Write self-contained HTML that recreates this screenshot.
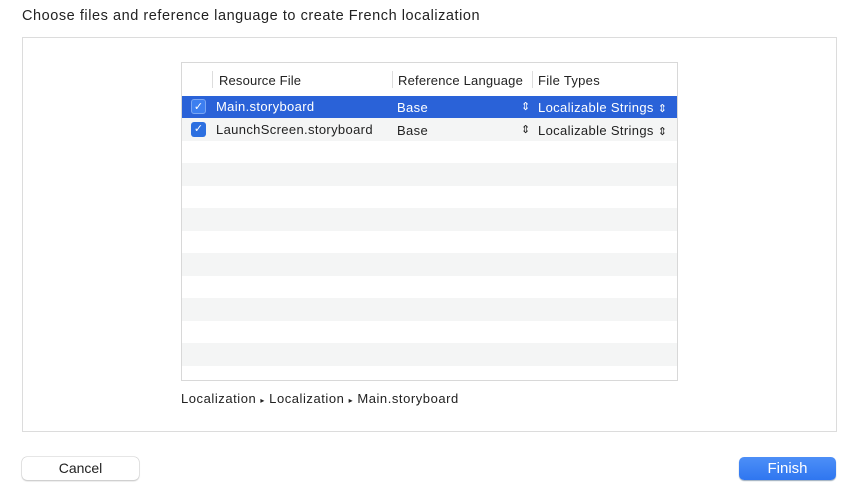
<!DOCTYPE html>
<html><head><style>
*{margin:0;padding:0;box-sizing:border-box}
body{width:850px;height:491px;background:#fff;font-family:"Liberation Sans",sans-serif;color:#222;position:relative;overflow:hidden;font-size:13px;letter-spacing:0.35px}
.a{position:absolute;white-space:nowrap}
.box{position:absolute;left:22px;top:37px;width:815px;height:395px;border:1px solid #dcdcdc;background:#fff}
.tbl{position:absolute;left:181px;top:62px;width:497px;height:319px;border:1px solid #d8d8d8;background:#fff;overflow:hidden}
.stripe{position:absolute;left:0;width:100%;height:22.5px;background:#f4f5f5}
.sep{position:absolute;top:8px;width:1px;height:17px;background:#ddd}
.cb{position:absolute;width:15px;height:15px;border-radius:3px;background:#2c6fe0;color:#fff;font-size:11px;line-height:15px;text-align:center;letter-spacing:0}
.btn{position:absolute;top:457px;height:23px;border-radius:5px;font-size:14px;text-align:center;line-height:23px;letter-spacing:0}
.ud{font-size:11px;letter-spacing:0}
</style></head><body>
<div class="a" style="left:22px;top:8px;font-size:14.5px;letter-spacing:0.55px">Choose files and reference language to create French localization</div>
<div class="box"></div>
<div class="tbl">
  <div class="sep" style="left:30px"></div>
  <div class="sep" style="left:210px"></div>
  <div class="sep" style="left:350px"></div>
  <div class="a" style="left:37px;top:10px;letter-spacing:0.15px">Resource File</div>
  <div class="a" style="left:216px;top:10px;letter-spacing:0.2px">Reference Language</div>
  <div class="a" style="left:356px;top:10px;letter-spacing:0.3px">File Types</div>
  <div style="position:absolute;left:0;top:33px;width:100%;height:22px;background:#2a62d8"></div>
  <div class="stripe" style="top:55px"></div>
  <div class="stripe" style="top:100px"></div>
  <div class="stripe" style="top:145px"></div>
  <div class="stripe" style="top:190px"></div>
  <div class="stripe" style="top:235px"></div>
  <div class="stripe" style="top:280px"></div>
  <div class="cb" style="left:9px;top:36px;background:#3d7ff0;border:1px solid #7aa6f3">✓</div>
  <div class="a" style="left:34px;top:36px;color:#fff">Main.storyboard</div>
  <div class="a" style="left:215px;top:37px;color:#fff">Base</div>
  <div class="a ud" style="left:339px;top:37px;color:#fff">⇕</div>
  <div class="a" style="left:356px;top:37px;color:#fff">Localizable Strings <span class="ud">⇕</span></div>
  <div class="cb" style="left:9px;top:59px">✓</div>
  <div class="a" style="left:34px;top:59px">LaunchScreen.storyboard</div>
  <div class="a" style="left:215px;top:60px">Base</div>
  <div class="a ud" style="left:339px;top:60px">⇕</div>
  <div class="a" style="left:356px;top:60px">Localizable Strings <span class="ud">⇕</span></div>
</div>
<div class="a" style="left:181px;top:391px;letter-spacing:0.55px">Localization <span style="font-size:8px">▸</span> Localization <span style="font-size:8px">▸</span> Main.storyboard</div>
<div class="btn" style="left:22px;width:117px;background:#fff;box-shadow:0 0 0 0.5px #ccc,0 1px 1.5px #bbb">Cancel</div>
<div class="btn" style="left:739px;width:97px;background:linear-gradient(#4d8ff7,#2f76f0);color:#fff;box-shadow:0 1px 1px #9ab;font-size:15px">Finish</div>
</body></html>
